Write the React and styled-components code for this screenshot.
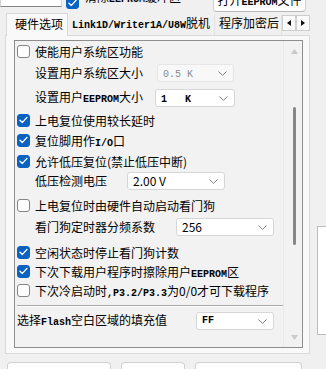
import React from "react";
import styled, { createGlobalStyle } from "styled-components";

const GlobalStyle = createGlobalStyle`
  html, body {
    margin: 0;
    padding: 0;
    overflow: hidden;
    background: #f0f0f0;
  }
  body {
    font-family: "Noto Sans CJK SC", "Noto Sans", sans-serif;
    font-size: 12px;
    color: #000;
  }
`;

const Window = styled.div`
  width: 326px;
  height: 369px;
  overflow: hidden;
  background: #f0f0f0;
  display: flex;
  flex-direction: column;
`;

const TopRow = styled.div`
  flex: none;
  height: 13px;
  display: flex;
  align-items: flex-end;
`;

const AddrInput = styled.div`
  width: 62px;
  height: 20px;
  margin-bottom: 6px;
  box-sizing: border-box;
  background: #fff;
  border: 1px solid #d4d4d4;
  border-bottom-color: #868686;
  padding-left: 4px;
  line-height: 18px;
  font-family: "Liberation Mono", monospace;
  font-weight: bold;
  font-size: 10px;
`;

const TopLabel = styled.div`
  margin: 0 0 4px 1px;
  line-height: 18px;
  white-space: nowrap;
`;

const Mono = styled.span`
  font-family: "Liberation Mono", monospace;
  font-weight: bold;
  font-size: 10px;
`;

const PushButton = styled.div`
  flex: none;
  box-sizing: border-box;
  width: ${(p) => p.$w}px;
  height: ${(p) => p.$h || 24}px;
  margin-left: ${(p) => p.$ml || 0}px;
  background: #fdfdfd;
  border: 1px solid #d0d0d0;
  border-bottom-color: #b8b8b8;
  border-radius: 4px;
  text-align: center;
  line-height: 18px;
  white-space: nowrap;
`;

const TopButton = styled(PushButton)`
  margin-left: auto;
  margin-right: 20px;
  margin-bottom: 1px;
  padding-top: 4px;
`;

const Main = styled.div`
  flex: 1;
  display: flex;
  min-height: 0;
`;

const TabColumn = styled.div`
  width: 305px;
  margin-left: 5px;
  display: flex;
  flex-direction: column;
`;

const TabStrip = styled.div`
  height: 22px;
  flex: none;
  display: flex;
  align-items: flex-end;
`;

const Tab = styled.div`
  position: relative;
  box-sizing: border-box;
  flex: ${(p) => (p.$grow ? "1" : "none")};
  width: ${(p) => (p.$w ? `${p.$w}px` : "auto")};
  min-width: 0;
  overflow: hidden;
  white-space: nowrap;
  line-height: 16px;
  ${(p) =>
    p.$active
      ? `
    height: 23px;
    margin: 0 0 -1px 1px;
    padding: 2px 0 0 8px;
    background: #f9f9f9;
    border: 1px solid #d9d9d9;
    border-bottom: none;
    z-index: 1;
  `
      : `
    height: 20px;
    padding: 0 0 0 4px;
    border-right: 1px solid #e2e2e2;
  `}
`;

const ArrowPair = styled.div`
  display: flex;
  margin-bottom: 4px;
`;

const ArrowBtn = styled.div`
  width: 14px;
  height: 16px;
  box-sizing: border-box;
  border: 1px solid #cdcdcd;
  background: #fbfbfb;
  display: flex;
  align-items: center;
  justify-content: center;
`;

const Panel = styled.div`
  height: 319px;
  flex: none;
  box-sizing: border-box;
  background: #f9f9f9;
  border: 1px solid #dadada;
  padding: 4px 6px 5px 8px;
  display: flex;
`;

const GroupBox = styled.div`
  flex: 1;
  border: 1px solid #8e8e8e;
  background: #f2f2f2;
  display: flex;
`;

const Content = styled.div`
  flex: 1;
  display: flex;
  flex-direction: column;
  padding-left: 2px;
`;

const Row = styled.div`
  height: 18px;
  flex: none;
  margin-top: ${(p) => p.$mt}px;
  padding-left: ${(p) => (p.$indent ? 18 : 0)}px;
  display: flex;
  align-items: center;
  white-space: nowrap;
`;

const Box = styled.div`
  flex: none;
  width: 13px;
  height: 13px;
  box-sizing: border-box;
  border-radius: 3px;
  margin-right: 5px;
  margin-bottom: ${(p) => p.$mb || 0}px;
  margin-left: ${(p) => p.$ml || 0}px;
  display: flex;
  align-items: center;
  justify-content: center;
  background: ${(p) => (p.$on ? "#0a63c2" : "#fdfdfd")};
  border: 1px solid ${(p) => (p.$on ? "#0a63c2" : "#858585")};
`;

const Label = styled.span`
  display: inline-block;
  width: ${(p) => p.$w}px;
  flex: none;
  line-height: 18px;
`;

const Combo = styled.div`
  flex: none;
  box-sizing: border-box;
  width: ${(p) => p.$w}px;
  height: 18px;
  padding: 0 6px 0 ${(p) => p.$pl || 5}px;
  border-radius: 3px;
  display: flex;
  align-items: center;
  justify-content: space-between;
  background: ${(p) => (p.$disabled ? "#f8f8f8" : "#fff")};
  border: 1px solid ${(p) => (p.$disabled ? "#e6e6e6" : "#d6d6d6")};
  color: ${(p) => (p.$disabled ? "#8c8c8c" : "#000")};
  line-height: 16px;
  white-space: pre;
`;

const Separator = styled.div`
  flex: none;
  height: 1px;
  margin: 6px 0 0 0;
  width: 266px;
  background: #a9a9a9;
  border-bottom: 1px solid #fff;
`;

const ScrollCol = styled.div`
  width: 19px;
  flex: none;
  display: flex;
  flex-direction: column;
  align-items: center;
  padding: 8px 0 7px 2px;
  box-sizing: border-box;
  border-left: 1px solid #e9e9e9;
`;

const Thumb = styled.div`
  width: 3px;
  height: 138px;
  margin-top: 53px;
  border-radius: 2px;
  background: #878787;
`;

const Spacer = styled.div`
  flex: 1;
`;

const ButtonRow = styled.div`
  flex: none;
  display: flex;
  margin-top: 8px;
  padding-left: 2px;
`;

const BottomButton = styled(PushButton)`
  padding-top: 3px;
`;

const SideColumn = styled.div`
  flex: 1;
  padding-left: 7px;
  overflow: hidden;
`;

const SideList = styled.div`
  margin-top: 213px;
  height: 107px;
  background: #fff;
  border: 1px solid #bdbdbd;
  border-right: none;
`;

const Check = ({ on, mb, ml }) => (
  <Box $on={on} $mb={mb} $ml={ml}>
    {on && (
      <svg width="9" height="8" viewBox="0 0 9 8">
        <polyline
          points="1,4.2 3.4,6.4 8,1.4"
          fill="none"
          stroke="#fff"
          strokeWidth="1.4"
          strokeLinecap="round"
          strokeLinejoin="round"
        />
      </svg>
    )}
  </Box>
);

const Chevron = () => (
  <svg width="9" height="5" viewBox="0 0 9 5">
    <polyline points="0.5,0.5 4.5,4.3 8.5,0.5" fill="none" stroke="#7d7d7d" strokeWidth="1" />
  </svg>
);

const Tri = ({ dir }) => (
  <svg width="4" height="6" viewBox="0 0 4 6">
    <polygon points={dir === "left" ? "4,0 0,3 4,6" : "0,0 4,3 0,6"} fill="#111" />
  </svg>
);

const ScrollArrow = ({ up }) => (
  <svg width="7" height="5" viewBox="0 0 7 5">
    <polygon points={up ? "0,5 3.5,0 7,5" : "0,0 3.5,5 7,0"} fill="#c9c9c9" />
  </svg>
);

const CheckRow = ({ mt, on, children }) => (
  <Row $mt={mt}>
    <Check on={on} />
    <span>{children}</span>
  </Row>
);

const ComboRow = ({ mt, label, labelW, value, w, disabled, pl }) => (
  <Row $mt={mt} $indent>
    <Label $w={labelW}>{label}</Label>
    <Combo $w={w} $disabled={disabled} $pl={pl}>
      <span>{value}</span>
      <Chevron />
    </Combo>
  </Row>
);

export default function App() {
  return (
    <Window>
      <GlobalStyle />
      <TopRow>
        <AddrInput>0x0000</AddrInput>
        <Check on mb={4} ml={4} />
        <TopLabel>
          清除<Mono>EEPROM</Mono>缓冲区
        </TopLabel>
        <TopButton $w={93} $h={26}>
          打开<Mono>EEPROM</Mono>文件
        </TopButton>
      </TopRow>
      <Main>
        <TabColumn>
          <TabStrip>
            <Tab $active $w={62}>硬件选项</Tab>
            <Tab $w={147}>
              <Mono>Link1D/Writer1A/U8W</Mono>脱机
            </Tab>
            <Tab $grow>程序加密后</Tab>
            <ArrowPair>
              <ArrowBtn>
                <Tri dir="left" />
              </ArrowBtn>
              <ArrowBtn>
                <Tri dir="right" />
              </ArrowBtn>
            </ArrowPair>
          </TabStrip>
          <Panel>
            <GroupBox>
              <Content>
                <CheckRow mt={1}>使能用户系统区功能</CheckRow>
                <ComboRow
                  mt={4}
                  label="设置用户系统区大小"
                  labelW={122}
                  w={77}
                  disabled
                  value={<Mono style={{ fontWeight: "normal" }}>0.5 K</Mono>}
                />
                <ComboRow
                  mt={7}
                  label={
                    <>
                      设置用户<Mono>EEPROM</Mono>大小
                    </>
                  }
                  labelW={120}
                  w={80}
                  value={<Mono>{"1   K"}</Mono>}
                />
                <CheckRow mt={4} on>上电复位使用较长延时</CheckRow>
                <CheckRow mt={2} on>
                  复位脚用作<Mono>I/O</Mono>口
                </CheckRow>
                <CheckRow mt={3} on>允许低压复位(禁止低压中断)</CheckRow>
                <ComboRow mt={2} label="低压检测电压" labelW={92} w={98} value="2.00 V" />
                <CheckRow mt={6}>上电复位时由硬件自动启动看门狗</CheckRow>
                <ComboRow mt={4} label="看门狗定时器分频系数" labelW={141} w={98} value="256" />
                <CheckRow mt={7} on>空闲状态时停止看门狗计数</CheckRow>
                <CheckRow mt={1} on>
                  下次下载用户程序时擦除用户<Mono>EEPROM</Mono>区
                </CheckRow>
                <CheckRow mt={1}>
                  下次冷启动时<Mono>,P3.2/P3.3</Mono>为0/0才可下载程序
                </CheckRow>
                <Separator />
                <Row $mt={5}>
                  <Label $w={179}>
                    选择<Mono>Flash</Mono>空白区域的填充值
                  </Label>
                  <Combo $w={78}>
                    <Mono>FF</Mono>
                    <Chevron />
                  </Combo>
                </Row>
              </Content>
              <ScrollCol>
                <ScrollArrow up />
                <Thumb />
                <Spacer />
                <ScrollArrow />
              </ScrollCol>
            </GroupBox>
          </Panel>
          <ButtonRow>
            <BottomButton $w={104}>
              下载<Mono>/</Mono>编程
            </BottomButton>
            <BottomButton $w={64} $ml={10}>停止</BottomButton>
            <BottomButton $w={107} $ml={10}>重复编程</BottomButton>
          </ButtonRow>
        </TabColumn>
        <SideColumn>
          <SideList />
        </SideColumn>
      </Main>
    </Window>
  );
}
